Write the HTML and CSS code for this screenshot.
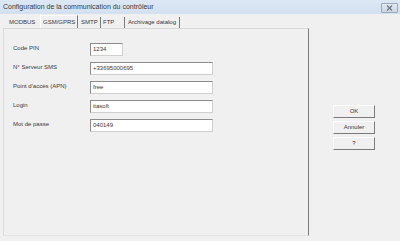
FILE: index.html
```html
<!DOCTYPE html>
<html>
<head>
<meta charset="utf-8">
<link rel="stylesheet" href="styles.css">
</head>
<body>
<div class="window">
  <div class="titlebar">
    <span class="title">Configuration de la communication du contrôleur</span>
    <span class="close">
      <svg width="7" height="6" viewBox="0 0 7 6"><path d="M1 0.5 L6 5.5 M6 0.5 L1 5.5" stroke="#6b7586" stroke-width="1.2" fill="none"/></svg>
    </span>
  </div>
  <div class="main">
    <div class="tabarea">
      <div class="tabs">
        <span class="tab t-modbus">MODBUS</span>
        <span class="tab t-gsm active">GSM/GPRS</span>
        <span class="tab t-smtp">SMTP</span>
        <span class="tab t-ftp">FTP</span>
        <span class="tab t-arch">Archivage datalog</span>
      </div>
      <div class="panel">
        <div class="row"><span class="label">Code PIN</span><span class="input short">1234</span></div>
        <div class="row"><span class="label">N° Serveur SMS</span><span class="input">+33695000695</span></div>
        <div class="row"><span class="label">Point d'accès (APN)</span><span class="input">free</span></div>
        <div class="row"><span class="label">Login</span><span class="input">itasoft</span></div>
        <div class="row"><span class="label">Mot de passe</span><span class="input">040149</span></div>
      </div>
    </div>
    <div class="side">
      <span class="btn">OK</span>
      <span class="btn">Annuler</span>
      <span class="btn">?</span>
    </div>
  </div>
</div>
</body>
</html>
```

FILE: styles.css
```css
html, body {
  margin: 0;
  padding: 0;
}
body {
  width: 400px;
  height: 241px;
  overflow: hidden;
  background: #f0f0f0;
  font-family: "Liberation Sans", Arial, sans-serif;
  color: #383838;
}
.window {
  width: 400px;
  height: 241px;
  display: flex;
  flex-direction: column;
}
.titlebar {
  height: 14px;
  flex: none;
  background: linear-gradient(#dde8f5, #d3e0f0);
  display: flex;
  justify-content: space-between;
  align-items: flex-start;
  padding: 0 2px 0 3px;
}
.title {
  font-size: 7px;
  line-height: 14px;
  color: #3a3a3a;
}
.close {
  margin-top: 3px;
  width: 15px;
  height: 8px;
  border: 1px solid #9aa8bc;
  border-radius: 1px;
  background: linear-gradient(#e3e9f1, #cdd6e2);
  display: flex;
  align-items: center;
  justify-content: center;
}
.close svg {
  display: block;
}
.main {
  flex: 1;
  display: flex;
}
.tabarea {
  margin-left: 3px;
  width: 306px;
  display: flex;
  flex-direction: column;
}
.tabs {
  height: 14px;
  display: flex;
  align-items: flex-end;
  font-size: 6px;
  white-space: nowrap;
}
.tab {
  height: 11px;
  line-height: 11px;
  padding: 0 2px 0 3px;
  border-right: 1px solid #7a7a7a;
  box-sizing: border-box;
  white-space: nowrap;
  flex: none;
}
.t-modbus {
  padding-left: 6px;
  width: 37px;
  border-right: none;
}
.t-gsm {
  width: 38px;
  height: 13px;
  line-height: 13px;
  border-top: 1px solid #ffffff;
  border-left: 1px solid #ffffff;
  padding-left: 2px;
}
.t-smtp {
  width: 23px;
}
.t-ftp {
  width: 24px;
  padding-left: 2px;
}
.t-arch {
  width: 55px;
  padding-left: 3px;
}
.panel {
  flex: 1;
  margin-bottom: 5px;
  border-top: 1px solid #d8d8d8;
  border-left: 1px solid #dcdcdc;
  border-bottom: 1px solid #e4e4e4;
  border-right: 1px solid #7a7a7a;
  padding: 14px 0 0 9px;
  display: flex;
  flex-direction: column;
  gap: 6px;
}
.row {
  height: 13px;
  display: flex;
  align-items: center;
  font-size: 6px;
}
.label {
  width: 77px;
  flex: none;
  margin-top: -3px;
}
.input {
  box-sizing: border-box;
  width: 123px;
  height: 13px;
  background: #ffffff;
  border: 1px solid #cfcfcf;
  border-top-color: #8c8c8c;
  border-left-color: #8c8c8c;
  padding: 1px 1px 0 2px;
  line-height: 8px;
  font-size: 6px;
  color: #383838;
}
.input.short {
  width: 33px;
}
.side {
  padding: 91px 0 0 24px;
  display: flex;
  flex-direction: column;
  gap: 3px;
}
.btn {
  box-sizing: border-box;
  width: 42px;
  height: 13px;
  font-size: 6px;
  line-height: 11px;
  text-align: center;
  background: #f0f0f0;
  border: 1px solid #ffffff;
  border-right-color: #7a7a7a;
  border-bottom-color: #7a7a7a;
  color: #383838;
}
```
